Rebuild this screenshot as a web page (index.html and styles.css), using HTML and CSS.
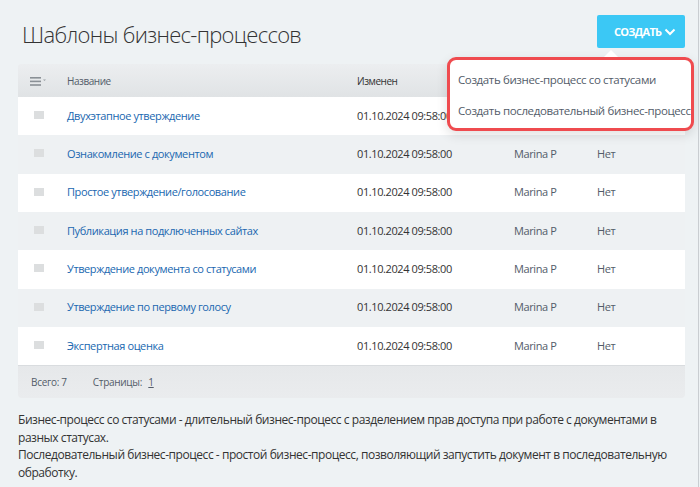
FILE: index.html
```html
<!DOCTYPE html>
<html lang="ru">
<head>
<meta charset="utf-8">
<link rel="stylesheet" href="styles.css">
</head>
<body>
<div class="page">
  <div class="topbar">
    <h1 class="title">Шаблоны бизнес-процессов</h1>
    <div class="create-wrap">
      <button class="create-btn">СОЗДАТЬ
        <svg class="chev" width="12" height="8" viewBox="0 0 12 8"><path d="M1.5 1.5 L6 6 L10.5 1.5" fill="none" stroke="#fff" stroke-width="2"/></svg>
      </button>
      <div class="menu">
        <div class="menu-item">Создать бизнес-процесс со статусами</div>
        <div class="menu-item">Создать последовательный бизнес-процесс</div>
      </div>
    </div>
  </div>

  <div class="grid">
    <div class="row head">
      <div class="c-check">
        <svg width="17" height="9" viewBox="0 0 17 9"><rect x="0" y="0" width="11" height="1.6" fill="#8a9096"/><rect x="0" y="3.6" width="11" height="1.6" fill="#8a9096"/><rect x="0" y="7.2" width="11" height="1.6" fill="#8a9096"/><path d="M13 2.5 L16 2.5 L14.5 4 Z" fill="#9aa0a6"/></svg>
      </div>
      <div class="c-name">Название</div>
      <div class="c-date">Изменен</div>
      <div class="c-auth"></div>
      <div class="c-auto"></div>
    </div>
    <div class="row odd"><div class="c-check"><span class="box"></span></div><div class="c-name"><a>Двухэтапное утверждение</a></div><div class="c-date">01.10.2024 09:58:00</div><div class="c-auth">Marina P</div><div class="c-auto">Нет</div></div>
    <div class="row even"><div class="c-check"><span class="box"></span></div><div class="c-name"><a>Ознакомление с документом</a></div><div class="c-date">01.10.2024 09:58:00</div><div class="c-auth">Marina P</div><div class="c-auto">Нет</div></div>
    <div class="row odd"><div class="c-check"><span class="box"></span></div><div class="c-name"><a>Простое утверждение/голосование</a></div><div class="c-date">01.10.2024 09:58:00</div><div class="c-auth">Marina P</div><div class="c-auto">Нет</div></div>
    <div class="row even"><div class="c-check"><span class="box"></span></div><div class="c-name"><a>Публикация на подключенных сайтах</a></div><div class="c-date">01.10.2024 09:58:00</div><div class="c-auth">Marina P</div><div class="c-auto">Нет</div></div>
    <div class="row odd"><div class="c-check"><span class="box"></span></div><div class="c-name"><a>Утверждение документа со статусами</a></div><div class="c-date">01.10.2024 09:58:00</div><div class="c-auth">Marina P</div><div class="c-auto">Нет</div></div>
    <div class="row even"><div class="c-check"><span class="box"></span></div><div class="c-name"><a>Утверждение по первому голосу</a></div><div class="c-date">01.10.2024 09:58:00</div><div class="c-auth">Marina P</div><div class="c-auto">Нет</div></div>
    <div class="row odd"><div class="c-check"><span class="box"></span></div><div class="c-name"><a>Экспертная оценка</a></div><div class="c-date">01.10.2024 09:58:00</div><div class="c-auth">Marina P</div><div class="c-auto">Нет</div></div>
    <div class="foot">
      <span class="total">Всего: 7</span>
      <span class="pages">Страницы: <u>1</u></span>
    </div>
  </div>

  <p class="note">Бизнес-процесс со статусами - длительный бизнес-процесс с разделением прав доступа при работе с документами в разных статусах.<br>Последовательный бизнес-процесс - простой бизнес-процесс, позволяющий запустить документ в последовательную обработку.</p>
</div>
</body>
</html>
```

FILE: styles.css
```css
html, body {
  margin: 0;
  padding: 0;
  background: #eef2f4;
  font-family: "Open Sans", "Noto Sans", sans-serif;
  color: #333;
}
.page {
  width: 699px;
  height: 487px;
  box-sizing: border-box;
  border-right: 1px solid #c9cdd1;
  padding: 0 13px 0 18px;
  overflow: hidden;
}
.topbar {
  display: flex;
  justify-content: space-between;
  align-items: flex-start;
  height: 64px;
}
.title {
  margin: 18px 0 0 4px;
  font-size: 22px;
  font-weight: 300;
  color: #333;
  line-height: 32px;
  letter-spacing: -0.7px;
}
.create-wrap {
  position: relative;
  margin-top: 15px;
}
.create-btn {
  display: flex;
  align-items: center;
  gap: 3px;
  height: 33px;
  width: 88px;
  padding: 0 0 0 17px;
  border: none;
  border-radius: 2px;
  background: #3bc8f5;
  color: #fff;
  font-family: inherit;
  font-size: 11px;
  font-weight: 700;
  letter-spacing: -0.7px;
}
.chev { margin-top: 1px; }
.menu {
  position: absolute;
  top: 42px;
  right: -9px;
  width: 241px;
  height: 64px;
  background: #fff;
  border: 3px solid #ef4b4f;
  border-radius: 9px;
  box-shadow: 0 4px 12px rgba(0,0,0,0.12);
  padding-top: 4px;
  box-sizing: content-box;
  z-index: 2;
}
.menu::before {
  content: "";
  position: absolute;
  top: -10px;
  left: 154px;
  width: 0;
  height: 0;
  border-left: 7px solid transparent;
  border-right: 7px solid transparent;
  border-bottom: 7px solid #fff;
}
.menu-item {
  font-size: 11.5px;
  letter-spacing: -0.37px;
  color: #535c69;
  line-height: 31px;
  padding-left: 8px;
  white-space: nowrap;
}
.grid {
  font-size: 11px;
  letter-spacing: -0.4px;
}
.row {
  display: grid;
  grid-template-columns: 49px 290px 157px 83px 1fr;
  align-items: center;
  height: 38.33px;
  box-sizing: border-box;
  padding-bottom: 2px;
}
.row.head {
  height: 33px;
  padding-bottom: 0;
  background: linear-gradient(#eceef0, #e0e3e5);
  border-radius: 3px 3px 0 0;
  color: #535c69;
  font-size: 10px;
  letter-spacing: -0.45px;
}
.row.head .c-check { padding-left: 12px; padding-top: 2px; }
.row.odd { background: #fff; }
.row.even { background: #eef1f3; }
.c-check { padding-left: 16px; display: flex; align-items: center; }
.box {
  width: 10px;
  height: 8px;
  background: #dcdedf;
}
.c-name a { color: #2067b0; }
.c-date { color: #333; }
.c-auth, .c-auto { color: #535c69; }
.foot {
  height: 32px;
  display: flex;
  align-items: center;
  gap: 26px;
  padding-left: 13px;
  background: linear-gradient(#e6e8ea, #eaecee);
  border-top: 1px solid #d9dcdf;
  border-radius: 0 0 4px 4px;
  font-size: 10px;
  letter-spacing: -0.3px;
  color: #535c69;
}
.foot u { margin-left: 4px; color: #535c69; }
.note {
  margin: 13px 0 0 0;
  font-size: 12px;
  letter-spacing: -0.45px;
  line-height: 17.4px;
  color: #333;
}
```
